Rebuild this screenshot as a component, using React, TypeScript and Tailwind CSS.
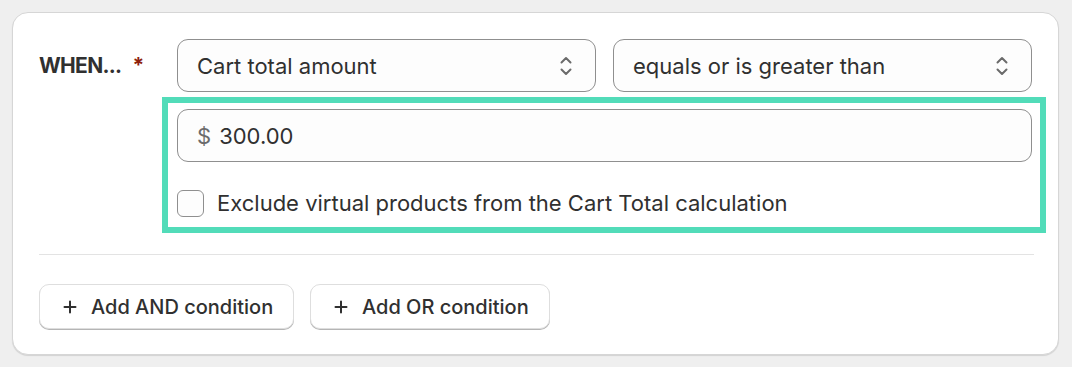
import React from "react";

function Chevrons() {
  return (
    <svg width="16" height="24" viewBox="0 0 16 24" fill="none" stroke="#6b6b6b" strokeWidth="2" strokeLinecap="round" strokeLinejoin="round">
      <path d="M3.5 8.5 L8 4 L12.5 8.5" />
      <path d="M3.5 15.5 L8 20 L12.5 15.5" />
    </svg>
  );
}

function Select({ label }: { label: string }) {
  return (
    <div className="flex-1 h-[53px] rounded-[11px] border border-[#8f8f8f] bg-[#fdfdfd] flex items-center justify-between pl-[19px] pr-[21px]">
      <span className="text-[22px] leading-[28px] text-[#303030]">{label}</span>
      <Chevrons />
    </div>
  );
}

function Plus() {
  return (
    <svg width="14" height="14" viewBox="0 0 14 14" stroke="#303030" strokeWidth="2" strokeLinecap="round">
      <path d="M7 1.5 V12.5 M1.5 7 H12.5" />
    </svg>
  );
}

export default function App() {
  return (
    <div
      className="w-[1072px] h-[367px] bg-[#efefef] pt-3 pl-3"
      style={{ fontFamily: "Inter, 'Noto Sans', sans-serif" }}
    >
      <div className="w-[1047px] h-[343px] rounded-[16px] border border-[#d6d6d6] bg-white shadow-[0_1px_1px_rgba(0,0,0,0.12)] pt-[26px] px-[26px]">
        <div className="flex">
          <div className="w-[138px] h-[53px] flex items-center">
            <span className="text-[21px] font-bold text-[#303030] tracking-[-0.7px]">WHEN...</span>
            <span className="text-[21px] font-bold text-[#8e1f0b] ml-[11px]">*</span>
          </div>
          <div className="w-[855px] flex flex-col">
            <div className="flex gap-[17px]">
              <Select label="Cart total amount" />
              <Select label="equals or is greater than" />
            </div>
            <div className="mt-[5px] -ml-[15px] -mr-[14px] border-[6px] border-[#52dcb9] pt-[6px] pb-[10px] pl-[9px] pr-[8px]">
              <div className="h-[53px] rounded-[11px] border border-[#8f8f8f] bg-[#fdfdfd] flex items-center pl-[19px] text-[22px] leading-[28px]">
                <span className="text-[#6b6b6b]">$</span>
                <span className="text-[#303030] ml-[8px]">300.00</span>
              </div>
              <div className="mt-[28px] flex items-center h-[27px]">
                <div className="w-[27px] h-[27px] rounded-[6px] border border-[#8f8f8f] bg-[#fdfdfd]" />
                <span className="ml-[13px] text-[22px] leading-[27px] text-[#303030]">
                  Exclude virtual products from the Cart Total calculation
                </span>
              </div>
            </div>
          </div>
        </div>
        <div className="mt-[21px] h-px bg-[#e3e3e3] w-[995px]" />
        <div className="mt-[29px] flex gap-[16px]">
          <button className="h-[45px] w-[255px] rounded-[10px] border border-[#dedede] bg-white shadow-[0_1px_0_#b5b5b5] flex items-center pl-[23px] gap-[14px]">
            <Plus />
            <span className="text-[20px] leading-[26px] font-medium text-[#303030]">Add AND condition</span>
          </button>
          <button className="h-[45px] w-[240px] rounded-[10px] border border-[#dedede] bg-white shadow-[0_1px_0_#b5b5b5] flex items-center pl-[23px] gap-[14px]">
            <Plus />
            <span className="text-[20px] leading-[26px] font-medium text-[#303030]">Add OR condition</span>
          </button>
        </div>
      </div>
    </div>
  );
}
